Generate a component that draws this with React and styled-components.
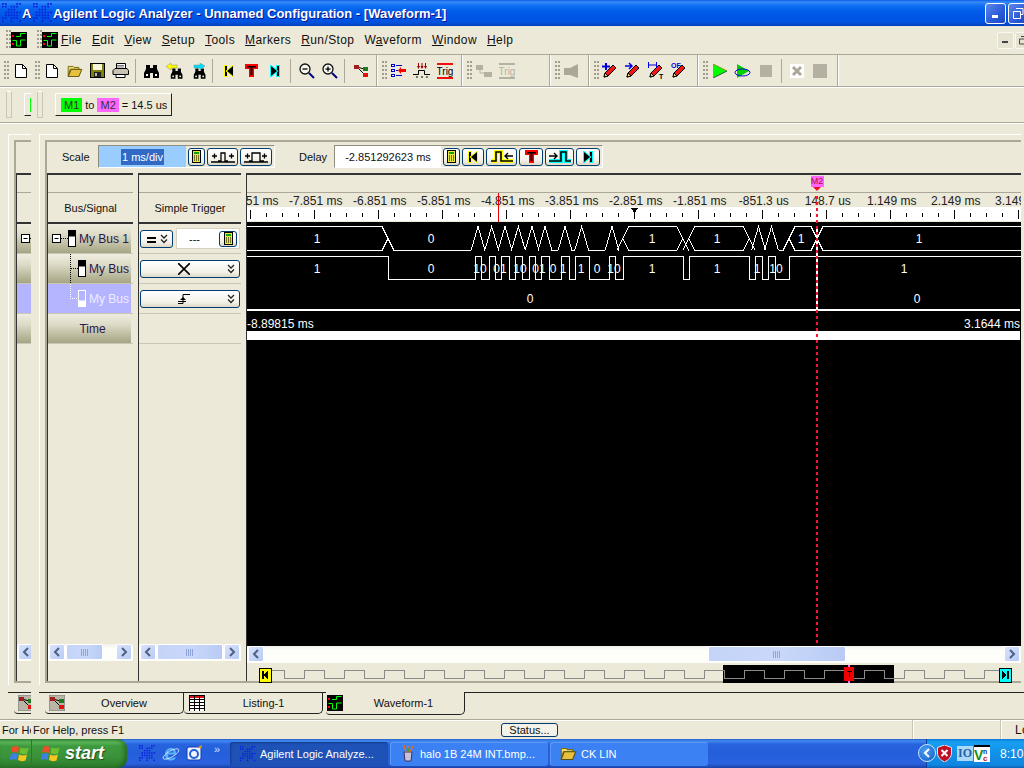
import styled, { createGlobalStyle } from 'styled-components';

const GlobalStyle = createGlobalStyle`
  html, body { margin: 0; padding: 0; background: #ece9d8; overflow: hidden; }
  body { font-family: "Liberation Sans", Arial, sans-serif; font-size: 11px; color: #111; }
  u { text-decoration: underline; }
`;

const BEIGE = '#ece9d8';
const RULE = '#aca899';

const Page = styled.div`
  width: 1024px;
  height: 768px;
  display: flex;
  flex-direction: column;
  overflow: hidden;
`;
const Desk = styled.div`
  height: 739px;
  display: flex;
`;
const Clip = styled.div`
  overflow: hidden;
  flex: ${p => (p.$ghost ? '0 0 31px' : '1 1 0')};
  min-width: 0;
`;
const Win = styled.div`
  width: 1024px;
  height: 739px;
  display: flex;
  flex-direction: column;
  background: ${BEIGE};
`;

/* title bar */
const TitleBar = styled.div`
  height: 26px;
  display: flex;
  align-items: center;
  padding: 0 3px 0 2px;
  color: #fff;
  font-weight: bold;
  font-size: 13px;
  background: linear-gradient(#0a5ce0 0, #3a8dfa 2px, #1572f5 5px, #0361ec 10px, #0056e5 16px, #0054e3 21px, #0450d8 23px, #003fb8 26px);
`;
const TitleText = styled.span`
  text-shadow: 1px 1px 0 #0f1089;
  white-space: nowrap;
`;
const CaptionButtons = styled.div`
  margin-left: auto;
  display: flex;
  gap: 2px;
`;
const CaptionButton = styled.div`
  width: 21px;
  height: 21px;
  box-sizing: border-box;
  border: 1px solid #fff;
  border-radius: 3px;
  background: ${p => (p.$close ? 'linear-gradient(135deg,#e8907a,#c43a14)' : 'linear-gradient(135deg,#5e88ec,#2a5ad8 60%,#1c46c0)')};
  display: flex;
  align-items: center;
  justify-content: center;
`;

/* menu */
const MenuBar = styled.div`
  height: 28px;
  border-bottom: 1px solid ${RULE};
  display: flex;
  align-items: center;
  padding-left: 6px;
  padding-right: 5px;
`;
const Gripper = styled.div`
  flex: none;
  width: 5px;
  height: ${p => p.$h || 20}px;
  background-image: radial-gradient(circle at 1px 1px, #a09d90 1px, transparent 1.1px);
  background-size: 3px 4px;
  margin-right: ${p => p.$mr ?? 4}px;
`;
const MenuItem = styled.span`
  margin-left: ${p => p.$ml}px;
  font-size: 12px;
  letter-spacing: 0.4px;
  white-space: nowrap;
  line-height: 16px;
`;
const MdiButtons = styled.div`
  margin-left: auto;
  display: flex;
  gap: 1px;
`;
const MdiButton = styled.div`
  width: 17px;
  height: 17px;
  border: 1px solid #f8f7f0;
  box-sizing: border-box;
  border-radius: 2px;
  background: #e6e3d2;
  display: flex;
  align-items: center;
  justify-content: center;
`;
const IconSlot = styled.div`
  margin: 0 3px 0 0;
  display: flex;
`;

/* toolbar */
const ToolBar = styled.div`
  height: 31px;
  border-bottom: 1px solid ${RULE};
  box-shadow: 0 1px 0 #fff;
  display: flex;
  align-items: stretch;
`;
const ToolGroup = styled.div`
  display: flex;
  align-items: center;
  padding: 0 ${p => p.$pr ?? 5}px 0 ${p => p.$pl ?? 4}px;
  border-right: 1px solid ${RULE};
  box-shadow: 1px 0 0 #fff;
  margin-right: 1px;
`;
const ToolButton = styled.div`
  flex: none;
  width: ${p => p.$w || 23}px;
  height: 24px;
  display: flex;
  align-items: center;
  justify-content: center;
`;
const ToolSep = styled.div`
  flex: none;
  width: 1px;
  height: 24px;
  background: ${RULE};
  margin: 0 ${p => p.$r ?? 4}px 0 ${p => p.$l ?? 3}px;
`;

/* marker read-out */
const MarkerBar = styled.div`
  height: 35px;
  display: flex;
  align-items: center;
  padding-left: 6px;
`;
const DragBar = styled.div`
  flex: none;
  width: 4px;
  height: 25px;
  border: 1px solid #c9c6b6;
  border-top-color: #fff;
  margin-right: 12px;
`;
const Readout = styled.div`
  flex: none;
  height: 23px;
  width: 117px;
  box-sizing: border-box;
  display: flex;
  align-items: center;
  gap: 3px;
  padding-left: 5px;
  border: 1px solid;
  border-color: #fff #222 #222 #fff;
  white-space: nowrap;
`;
const Chip = styled.span`
  background: ${p => p.$bg};
  padding: 0 3px;
  line-height: 14px;
  height: 14px;
  color: #333;
`;

/* panels */
const Body = styled.div`
  height: 570px;
  flex: none;
  box-sizing: border-box;
  border-top: 1px solid ${RULE};
  box-shadow: inset 0 1px 0 #fff;
  padding: 11px 34px 7px 8px;
`;
const Frame = styled.div`
  height: 100%;
  box-sizing: border-box;
  border-top: 1px solid #fff;
  border-left: 1px solid #fff;
  padding: 5px 0 0 5px;
  display: flex;
`;
const Inner = styled.div`
  flex: 1;
  min-width: 0;
  box-sizing: border-box;
  height: 543px;
  border: 2px solid ${RULE};
  border-right: none;
  display: flex;
  flex-direction: column;
`;
const ScaleRow = styled.div`
  height: 31px;
  box-sizing: border-box;
  flex: none;
  display: flex;
  align-items: center;
  padding: 0 0 2px 15px;
`;
const FieldLabel = styled.span`
  width: ${p => p.$w}px;
  flex: none;
`;
const Well = styled.div`
  flex: none;
  height: 23px;
  box-sizing: border-box;
  display: flex;
  align-items: center;
  gap: 2px;
  border: 1px solid;
  border-color: #8f8d80 #fff #fff #8f8d80;
  padding-right: 2px;
  margin-left: ${p => p.$ml || 0}px;
`;
const Entry = styled.div`
  width: ${p => p.$w}px;
  height: 100%;
  background: ${p => p.$bg};
  display: flex;
  align-items: center;
  justify-content: center;
`;
const Selected = styled.span`
  background: #316ac5;
  color: #fff;
  line-height: 16px;
  padding: 0 1px;
`;
const XpButton = styled.div`
  flex: none;
  width: ${p => p.$w}px;
  height: ${p => p.$h || 18}px;
  box-sizing: border-box;
  border: 1px solid #003c74;
  border-radius: 3px;
  background: linear-gradient(#fff, #f3f1e8 70%, #dcd8c6);
  display: flex;
  align-items: center;
  justify-content: center;
`;
const Columns = styled.div`
  flex: 1;
  min-height: 0;
  display: grid;
  grid-template-columns: 86px 103px 775px;
  column-gap: 5px;
`;
const Column = styled.div`
  display: flex;
  flex-direction: column;
  border-top: 2px solid #333;
  border-left: 1px solid #333;
  min-height: 0;
  position: relative;
`;
const ColTop = styled.div`
  height: 17px;
  flex: none;
  border-bottom: 1px solid ${RULE};
`;
const ColTitle = styled.div`
  height: 29px;
  flex: none;
  display: flex;
  align-items: center;
  justify-content: center;
  border-bottom: 2px solid #333;
`;
const RowCell = styled.div`
  height: 30px;
  flex: none;
  box-sizing: border-box;
  border-bottom: 1px solid #c9c6b6;
  display: flex;
  align-items: center;
  padding: ${p => p.$pad || '0'};
  gap: 3px;
`;
const SignalButton = styled.div`
  width: 83px;
  height: 29px;
  box-sizing: border-box;
  font-size: 12px;
  display: flex;
  align-items: center;
  justify-content: ${p => (p.$center ? 'center' : 'flex-start')};
  padding-left: ${p => (p.$center ? 6 : 0)}px;
  color: ${p => (p.$sel ? '#eeeeff' : '#2c1748')};
  background: ${p => (p.$sel ? '#b5b5ff' : 'linear-gradient(#efeddf, #dedcc8 35%, #a5a483)')};
  white-space: nowrap;
`;
const Dash = styled.div`
  flex: 1;
  height: 19px;
  background: #fff;
  display: flex;
  align-items: center;
  justify-content: space-between;
  padding-left: 12px;
  padding-right: 2px;
  border: 1px solid #d6d3c2;
`;
const Grow = styled.div`
  flex: 1;
`;
const ScrollRow = styled.div`
  flex: none;
  height: 17px;
  display: flex;
  gap: 1px;
  padding: 0 1px;
  margin-bottom: ${p => p.$mb ?? 20}px;
  background: linear-gradient(#f3f1ec, #fefefb 30%, #fdfdf9);
`;
const ScrollBtn = styled.div`
  flex: none;
  width: 16px;
  height: 16px;
  box-sizing: border-box;
  border: 1px solid #fff;
  border-radius: 2px;
  background: linear-gradient(135deg, #d8e3fb, #b9cbf5);
  display: flex;
  align-items: center;
  justify-content: center;
`;
const ScrollTrack = styled.div`
  flex: 1;
  min-width: 0;
  display: flex;
`;
const Thumb = styled.div`
  height: 16px;
  box-sizing: border-box;
  border: 1px solid #fff;
  border-radius: 2px;
  flex: none;
  width: ${p => p.$w}px;
  margin-left: ${p => p.$l || 0}px;
  background: linear-gradient(90deg, #c4d4f8, #c9d8fa 50%, #b9cbf5);
  display: flex;
  align-items: center;
  justify-content: center;
`;
const Marker = styled.div`
  position: absolute;
  left: 563px;
  top: 0;
  width: 14px;
  height: 17px;
  display: flex;
  flex-direction: column;
  align-items: center;
`;
const MarkerFlag = styled.div`
  width: 13px;
  height: 11px;
  background: #ff66ff;
  color: #b01030;
  font-size: 9px;
  line-height: 11px;
  text-align: center;
  border-top: 1px solid #ddd;
`;
const MarkerArrow = styled.div`
  width: 0;
  height: 0;
  border-left: 4px solid transparent;
  border-right: 4px solid transparent;
  border-top: 4px solid #f01020;
`;
const WaveSvg = styled.svg`
  display: block;
  flex: none;
  font-family: "Liberation Sans", Arial, sans-serif;
  font-size: 12px;
`;

/* tabs */
const TabStrip = styled.div`
  height: 26px;
  flex: none;
  margin-left: 8px;
  border-top: 1px solid #222;
  display: flex;
  padding-left: 6px;
`;
const Tab = styled.div`
  flex: none;
  width: ${p => p.$w}px;
  height: ${p => (p.$active ? 23 : 21)}px;
  margin-left: ${p => p.$ml || 0}px;
  margin-top: ${p => (p.$active ? -1 : 0)}px;
  box-sizing: border-box;
  background: ${BEIGE};
  border-bottom: 1px solid #222;
  border-right: 1px solid #222;
  border-bottom-right-radius: 5px;
  border-bottom-left-radius: 4px;
  display: flex;
  align-items: center;
  padding-left: ${p => p.$pl}px;
`;
const TabLabel = styled.span`
  flex: 1;
  text-align: center;
`;

/* status */
const StatusBar = styled.div`
  height: 19px;
  flex: none;
  border-top: 1px solid ${RULE};
  box-shadow: inset 0 1px 0 #fff;
  display: flex;
  align-items: center;
  white-space: nowrap;
`;
const StatusText = styled.span`
  flex: none;
  width: 468px;
  padding-left: 2px;
  font-size: 11px;
`;
const StatusBtn = styled.div`
  flex: none;
  width: 57px;
  height: 14px;
  box-sizing: border-box;
  border: 1px solid #003c74;
  border-radius: 3px;
  background: #f4f3ea;
  text-align: center;
  line-height: 12px;
`;
const StatusPane = styled.div`
  flex: none;
  height: 100%;
  box-sizing: border-box;
  width: ${p => p.$w}px;
  border-right: 1px solid #c9c6b6;
  box-shadow: 1px 0 0 #fff;
`;

/* taskbar */
const TaskBar = styled.div`
  height: 29px;
  display: flex;
  align-items: center;
  color: #fff;
  background: linear-gradient(#2a5cc8 0, #3f8cf3 2px, #2964de 5px, #245edb 50%, #2a62de 85%, #1941a5 100%);
`;
const StartButton = styled.div`
  flex: none;
  width: 127px;
  height: 29px;
  box-sizing: border-box;
  padding-left: 10px;
  display: flex;
  align-items: center;
  border-radius: 0 9px 9px 0;
  background: linear-gradient(#3c8a3c 0, #5cb85c 3px, #3f9a3f 7px, #3a933a 60%, #2c7a2c 100%);
  box-shadow: inset -3px 0 4px rgba(20, 70, 20, 0.5);
`;
const StartSeam = styled.div`
  width: 1px;
  height: 29px;
  margin: 0 9px 0 1px;
  background: #2b7a2b;
`;
const StartText = styled.span`
  margin-left: 4px;
  font-size: 18px;
  font-weight: bold;
  font-style: italic;
  text-shadow: 1px 1px 1px #1d4f1d;
`;
const QuickIcons = styled.div`
  flex: none;
  width: 103px;
  display: flex;
  align-items: center;
  gap: 6px;
  padding-left: 12px;
  box-sizing: border-box;
`;
const Chevrons = styled.span`
  font-size: 11px;
  margin: -10px 0 0 5px;
  color: #cfe0ff;
`;
const TaskButton = styled.div`
  flex: none;
  width: 158px;
  height: 24px;
  margin-right: 2px;
  box-sizing: border-box;
  padding-left: 10px;
  border-radius: 3px;
  display: flex;
  align-items: center;
  gap: 4px;
  font-size: 11px;
  background: ${p => (p.$active ? '#1e52b7' : '#3c81f3')};
  box-shadow: ${p => (p.$active ? 'inset 1px 1px 2px #143a8a' : 'inset 1px 1px 0 #5f99f6')};
  white-space: nowrap;
`;
const Tray = styled.div`
  margin-left: auto;
  flex: none;
  width: 98px;
  height: 29px;
  position: relative;
  display: flex;
  align-items: center;
  padding-left: 10px;
  box-sizing: border-box;
  border-left: 1px solid #0b3d9e;
  background: linear-gradient(#0c78d8 0, #18a0f0 3px, #1290e8 50%, #0f86df 90%, #0b62b8 100%);
`;
const TrayBack = styled.div`
  position: absolute;
  left: -9px;
  top: 5px;
  width: 18px;
  height: 18px;
  border-radius: 50%;
  border: 1px solid #cfe6ff;
  box-sizing: border-box;
  background: radial-gradient(circle at 40% 35%, #4aa0f5, #1058c8);
  display: flex;
  align-items: center;
  justify-content: center;
`;
const Clock = styled.span`
  margin-left: 10px;
  font-size: 12px;
`;
const IoBox = styled.span`
  flex: none;
  width: 16px;
  height: 15px;
  margin: 0 1px 0 5px;
  background: #a9d8f8;
  color: #2a62a8;
  font-family: "Liberation Serif", serif;
  font-weight: bold;
  font-size: 12px;
  line-height: 15px;
  text-align: center;
`;

/* drawings */
const GREEN = '#00ff00';

const Starburst = ({ size = 20 }) => {
  const dots = [];
  for (let i = 0; i < 7; i++) {
    for (let j = 0; j < 7; j++) {
      const d = Math.abs(i - 3) + Math.abs(j - 3);
      if (i === j || i + j === 6 || d <= 2 || (i + j) % 4 === 1) dots.push([i, j]);
    }
  }
  return (
    <svg width={size} height={size} viewBox="0 0 14 14">
      {dots.map(([i, j]) => (
        <rect key={`${i}-${j}`} x={i * 2} y={j * 2} width="1.2" height="1.2" fill="#0a1ee0" />
      ))}
    </svg>
  );
};
const WaveIcon = () => (
  <svg width="16" height="16" viewBox="0 0 16 16">
    <rect width="16" height="16" />
    <path d="M5 4.500h4.500V1.500h5M1.500 8.500h4v5.500h4v-6h5" fill="none" stroke={GREEN} />
    <rect x="1" y="3" width="2" height="2" fill="#f00" />
    <rect x="1" y="11" width="2" height="2" fill="#f00" />
  </svg>
);
const Doc = () => (
  <svg width="14" height="16" viewBox="0 0 14 16">
    <path d="M1.500 1.500h7l4 4v9h-11z" fill="#fff" stroke="#000" />
    <path d="M8.500 1.500v4h4" fill="none" stroke="#000" />
  </svg>
);
const Folder = ({ w = 16 }) => (
  <svg width={w} height={w * 0.85} viewBox="0 0 16 14">
    <path d="M1 12.500v-10h5l1 1h5v2h-9l-2 7z" fill="#f5dc70" stroke="#7a6a10" />
    <path d="M1 13l3-7.500h11l-3 7.500z" fill="#e8c040" stroke="#5a5008" />
  </svg>
);
const Save = () => (
  <svg width="15" height="15" viewBox="0 0 15 15">
    <rect x=".5" y=".5" width="14" height="14" fill="#7f7f10" stroke="#000" />
    <rect x="3" y="1" width="9" height="6" fill="#f5f5e0" />
    <rect x="4" y="9" width="7" height="5" fill="#222" />
    <rect x="5" y="10" width="2" height="3" fill="#bbb" />
  </svg>
);
const Printer = () => (
  <svg width="17" height="15" viewBox="0 0 17 15">
    <path d="M4.500 6V.5h9V6" fill="#fff" stroke="#000" />
    <path d="M1 7.500l2-2h12l1.500 2v4h-15.500z" fill="#c6c3b4" stroke="#000" />
    <path d="M4 11.500h9v3H4z" fill="#fff" stroke="#000" />
    <path d="M5 2.500h7M5 4h7" stroke="#777" />
  </svg>
);
const Binocular = ({ arrow, dir }) => (
  <svg width="17" height="16" viewBox="0 0 17 16">
    <g transform={arrow ? 'translate(4 4) scale(.78)' : undefined}>
      <path d="M3 2h4v3h3V2h4v4l2 4v5h-6v-5H7v5H1v-5l2-4z" />
      <rect x="3" y="11" width="2" height="2" fill="#fff" />
      <rect x="12" y="11" width="2" height="2" fill="#fff" />
    </g>
    {arrow && (
      <path
        d={dir < 0 ? 'M0 3.500L5 0v2h6v3H5v2z' : 'M16 3L11 0v2H5v3h6v2z'}
        fill={arrow}
        stroke="#777"
        strokeWidth=".4"
      />
    )}
  </svg>
);
const EndMark = ({ bg, flip, size = 12 }) => (
  <svg width={size} height={size} viewBox="0 0 12 12">
    <g transform={flip ? 'matrix(-1 0 0 1 12 0)' : undefined} stroke={bg} strokeWidth="2" paintOrder="stroke">
      <rect x="2" y="1" width="2" height="10" />
      <path d="M10 1v10L4 6z" />
    </g>
  </svg>
);
const TeeMark = ({ size = 13 }) => (
  <svg width={size} height={size} viewBox="0 0 13 13">
    <path d="M0 0h13v5H9v8H4V5H0z" fill="#f00" />
    <path d="M2 2h9v1.500H7.500V11h-2V3.500H2z" />
  </svg>
);
const Magnifier = ({ plus }) => (
  <svg width="16" height="16" viewBox="0 0 16 16">
    <circle cx="6" cy="6" r="5" fill="#f8f8f0" stroke="#111" strokeWidth="1.300" />
    <path d="M3.500 6h5" stroke="#000" strokeWidth="1.300" />
    {plus && <path d="M6 3.500v5" stroke="#000" strokeWidth="1.300" />}
    <path d="M10 10l5 5" stroke="#000080" strokeWidth="2" />
  </svg>
);
const TreeIcon = () => (
  <svg width="14" height="14" viewBox="0 0 14 14">
    <path d="M3 3l7 2M4 4l6 6" stroke="#000" />
    <rect x="0" y="1" width="5" height="4" fill="#a02020" />
    <rect x="9" y="3" width="5" height="4" fill="#1d7a1d" />
    <rect x="9" y="9" width="5" height="4" fill="#e01010" />
  </svg>
);
const ListIcon = () => (
  <svg width="15" height="14" viewBox="0 0 15 14">
    <g fill="none" stroke="#00c">
      <rect x=".5" y=".5" width="3" height="2" />
      <rect x=".5" y="5.500" width="3" height="2" />
      <rect x=".5" y="10.500" width="3" height="2" />
      <path d="M5 1.500h6M5 6.500h2M5 11.500h6" />
    </g>
    <path d="M15 5v3h-5v2L7 6.500 10 3v2z" fill="#f00" />
  </svg>
);
const TrigEdge = () => (
  <svg width="17" height="15" viewBox="0 0 17 15">
    <path d="M5.500 0v5M9 0v5M12.500 0v5" stroke="#a00000" />
    <path d="M4 3l1.500 3L7 3zM7.500 3L9 6l1.500-3zM11 3l1.500 3L14 3z" fill="#a00000" />
    <path d="M0 11.500h5.500V7.500h6v4H17" fill="none" stroke="#000" />
    <path d="M3 14h2M8 14h2M13 14h2" stroke="#000" />
  </svg>
);
const TrigMark = ({ grey }) => {
  const c = grey ? '#b4b1a2' : '#f01010';
  return (
    <svg width="16" height="16" viewBox="0 0 16 16" fontFamily="Liberation Sans" fontSize="10">
      <rect y="0" width="16" height="2" fill={c} />
      <rect y="14" width="16" height="2" fill={c} />
      <text x="8" y="12" textAnchor="middle" fill={grey ? c : '#000'}>Trig</text>
    </svg>
  );
};
const Speaker = () => (
  <svg width="15" height="14" viewBox="0 0 15 14">
    <path d="M0 4h6l8-4v14l-8-3H0z" fill="#aca899" />
  </svg>
);
const Pencil = ({ head }) => (
  <svg width="17" height="17" viewBox="0 0 17 17" fontFamily="Liberation Sans" fontSize="7" fontWeight="bold">
    <path d="M2 15l1-4 8-8 3 3-8 8z" fill="#f01818" stroke="#000" />
    <path d="M2 15l1-4 3 3z" fill="#f5e070" stroke="#000" />
    {head === 'plus' && <path d="M0 4.500h8M4 1v7" stroke="#0000e0" strokeWidth="2" />}
    {head === 'arrow' && <path d="M0 4h7M4 1l3 3-3 3" fill="none" stroke="#0000e0" strokeWidth="1.500" />}
    {head === 'span' && <path d="M.5 0v6M8.500 0v6M1 3h7" stroke="#0000e0" />}
    {head === 'of' && <text x="0" y="6" fill="#0000e0">OF</text>}
    {head === 'span' && <text x="11" y="17" fill="#000">T</text>}
  </svg>
);
const Play = () => (
  <svg width="14" height="14" viewBox="0 0 14 14">
    <path d="M0 0l14 7-14 7z" fill={GREEN} />
    <path d="M0 0l14 7" stroke="#8a8a20" />
    <path d="M0 14l14-7" stroke="#444" />
  </svg>
);
const PlayLoop = () => (
  <svg width="17" height="14" viewBox="0 0 17 14">
    <path d="M3 0l12 7-12 7z" fill="#00d000" />
    <ellipse cx="8.500" cy="8.500" rx="7.500" ry="3.500" fill="none" stroke="#0000e0" />
  </svg>
);
const GreySquare = ({ s, x }) => (
  <svg width={s} height={s} viewBox="0 0 14 14">
    <rect width="14" height="14" fill={x ? '#fff' : '#b4b1a2'} />
    {x && <path d="M3 3l8 8M11 3l-8 8" stroke="#aca899" strokeWidth="3" />}
  </svg>
);
const Calc = () => (
  <svg width="9" height="13" viewBox="0 0 9 13">
    <rect x=".5" y=".5" width="8" height="12" fill="#e8e840" stroke="#000" />
    <rect x="2" y="2" width="5" height="2" fill="#10a010" />
    <path d="M2 6h1M4 6h1M6 6h1M2 8h1M4 8h1M6 8h1M2 10h1M4 10h1M6 10h1" stroke="#000" />
  </svg>
);
const Pulse = ({ tone, flip }) => (
  <svg width="24" height="13" viewBox="0 0 24 13">
    <g transform={flip ? 'matrix(-1 0 0 1 24 0)' : undefined} fill="none">
      <path d="M1 11h5V2h5v9h12" stroke={tone} strokeWidth="4" />
      <path d="M1 11h5V2h5v9h12" stroke="#000" strokeWidth="1.600" />
      <path d="M23 6h-8M18 3l-3 3 3 3" stroke="#000" strokeWidth="1.400" />
    </g>
  </svg>
);
const PulseAdd = ({ wide }) => (
  <svg width="24" height="12" viewBox="0 0 24 12">
    <path d={wide ? 'M0 11h24M1 5h5M3.500 2.500v5M18 5h5M20.500 2.500v5M5 10h3V2h8v8h4' : 'M0 11h24M1 5h5M3.500 2.500v5M18 5h5M20.500 2.500v5M7 10h3V2h4v8h3'} fill="none" stroke="#000" strokeWidth="1.300" />
  </svg>
);
const DoubleDown = () => (
  <svg width="8" height="10" viewBox="0 0 8 10">
    <path d="M1 1l3 3 3-3M1 5.500l3 3 3-3" fill="none" stroke="#222" strokeWidth="1.300" />
  </svg>
);
const Chev = ({ right, color = '#4d6185' }) => (
  <svg width="8" height="10" viewBox="0 0 8 10">
    <path d={right ? 'M2 1l4 4-4 4' : 'M6 1L2 5l4 4'} fill="none" stroke={color} strokeWidth="2" />
  </svg>
);
const Ridges = () => (
  <svg width="8" height="7" viewBox="0 0 8 7">
    <path d="M.5 0v7M2.500 0v7M4.500 0v7M6.500 0v7" stroke="#8fa4d8" />
  </svg>
);
const TreeGlyph = ({ level, last, selected }) => {
  const ink = selected ? '#fff' : '#000';
  const w = level ? 41 : 31;
  return (
    <svg width={w} height="29" viewBox={`0 0 ${w} 29`}>
      {!level && <rect x="4.500" y="10.500" width="8" height="8" fill="#fff" stroke="#000" />}
      {!level && <path d="M6.500 14.500h4" stroke="#000" />}
      {!level && <path d="M13 14.500h7" stroke="#000" strokeDasharray="1 1" />}
      {level > 0 && (
        <path d={last ? 'M22.500 0v14.500H30' : 'M22.500 0v29M23 14.500h7'} fill="none" stroke={ink} strokeDasharray="1 1" />
      )}
      <g transform={level ? 'translate(30 0)' : 'translate(20 0)'}>
        <rect x=".5" y="6.500" width="7" height="16" fill={selected ? 'none' : '#fff'} stroke={ink} />
        <rect x=".5" y={selected ? 16.500 : 6.500} width="7" height="6" fill={ink} />
      </g>
    </svg>
  );
};
const XBus = () => (
  <svg width="12" height="12" viewBox="0 0 12 12">
    <path d="M0 0l12 12M12 0L0 12" stroke="#000" strokeWidth="1.600" />
  </svg>
);
const Edge = () => (
  <svg width="12" height="12" viewBox="0 0 12 12">
    <path d="M0 10.500h5V1.500h7" fill="none" stroke="#000" />
    <path d="M2 7l3-3 3 3z" />
    <path d="M0 8.500h8" stroke="#000" />
  </svg>
);
const ListingIcon = () => (
  <svg width="16" height="16" viewBox="0 0 16 16">
    <rect width="16" height="16" fill="#fff" />
    <rect width="16" height="3" fill="#e01010" />
    <path d="M0 .5h16M0 4.500h16M0 7.500h16M0 10.500h16M0 13.500h16M.5 0v16M5.500 0v16M10.500 0v16M15.500 0v16" stroke="#000" />
  </svg>
);
const OverviewIcon = () => (
  <svg width="16" height="16" viewBox="0 0 16 16">
    <rect width="16" height="16" fill="#b9b6a8" stroke="#777" />
    <g transform="translate(1 1)"><TreeIcon /></g>
  </svg>
);
const XpLogo = () => (
  <svg width="20" height="19" viewBox="0 0 20 19">
    <path d="M2 3q3-2 7 0l-1 6q-4-2-7 0z" fill="#e8502a" />
    <path d="M10.500 3.500q4 2 8 0l-1.500 6q-4 1.500-7.500-.5z" fill="#6fc030" />
    <path d="M1 10.500q3-2 6.500-.5L6.500 16q-3-1.500-7 0z" fill="#3f80e8" />
    <path d="M9 10.500q4 2 8 0l-1.500 6q-4 1.500-7.500-.5z" fill="#f5c820" />
  </svg>
);
const IeIcon = () => (
  <svg width="18" height="18" viewBox="0 0 18 18">
    <path d="M4 9.500h10c.5-4-2-6.500-5-6.500S3 5.500 3 9.500s2.500 6 6 6c2.500 0 4-1 5-3h-3c-.5 .8-1 1-2 1-1.800 0-3-1.300-3-4zM6 7.500c.3-1.800 1.500-2.500 3-2.500s2.500 .8 2.500 2.500z" fill="#5ab4f5" fillRule="evenodd" />
    <ellipse cx="9" cy="9" rx="9" ry="3" fill="none" stroke="#d8ecff" strokeWidth=".8" transform="rotate(-30 9 9)" />
  </svg>
);
const MailIcon = () => (
  <svg width="17" height="17" viewBox="0 0 17 17">
    <rect x="1" y="2" width="14" height="13" rx="2" fill="#f0f4ff" stroke="#1040b0" />
    <circle cx="8" cy="9" r="4" fill="none" stroke="#2060d8" strokeWidth="2" />
    <path d="M12 2l4-2-1 4z" fill="#e8a020" />
  </svg>
);
const BrushesIcon = () => (
  <svg width="16" height="17" viewBox="0 0 16 17">
    <path d="M4 7h8l-1 9H5z" fill="#c8c2d8" stroke="#403060" />
    <path d="M6 7L4 0M8 7V1M10 7l3-6" stroke="#e07020" strokeWidth="1.500" />
    <path d="M8 7V3" stroke="#30a040" strokeWidth="1.500" />
  </svg>
);
const Shield = () => (
  <svg width="15" height="17" viewBox="0 0 15 17">
    <path d="M7.500 0l7 2.500V8c0 4-3 7-7 9-4-2-7-5-7-9V2.500z" fill="#c01020" stroke="#dfe8f0" />
    <path d="M4.500 5l6 6M10.500 5l-6 6" stroke="#fff" strokeWidth="2" />
  </svg>
);
const VncIcon = () => (
  <svg width="16" height="17" viewBox="0 0 16 17" fontFamily="Liberation Sans" fontWeight="bold">
    <rect width="16" height="17" fill="#fff" />
    <rect width="16" height="2" />
    <text x="0" y="15" fontSize="14" fill="#109010">V</text>
    <text x="9" y="9" fontSize="7" fill="#1030c0">n</text>
    <text x="9" y="16" fontSize="8" fill="#c01010">c</text>
  </svg>
);

/* waveform chart: coordinates are those of the screen */
const X0 = 247;
const Y0 = 193;
const majors = [...Array(13)].map((_, i) => 250.3 + i * 64);
const rulerLabels = ['-8.851 ms', '-7.851 ms', '-6.851 ms', '-5.851 ms', '-4.851 ms', '-3.851 ms', '-2.851 ms', '-1.851 ms', '-851.3 us', '148.7 us', '1.149 ms', '2.149 ms', '3.149 ms'];
const minors = [...Array(50)].map((_, i) => 250.3 + i * 16).filter((_, i) => i % 4 !== 0);

const highs = [
  [240, 388], [474.7, 481.3], [488.7, 494.7], [501.3, 508.7], [514.7, 522], [528.7, 535.3], [541.3, 548.7],
  [561.3, 568.7], [574.7, 588.7], [608.7, 615.3], [622.7, 682.7], [688.7, 749.3], [755, 762], [768, 775],
  [789, 817], [817, 1030],
];
const BT = 226.5;
const BB = 250.5;
const BM = 238.5;
const isNarrow = ([a, b]) => b - a < 15;
const shapeStart = s => (isNarrow(s) ? (s[0] + s[1]) / 2 - 7 : s[0] - 6);
const shapeEnd = s => (isNarrow(s) ? (s[0] + s[1]) / 2 + 7 : s[1] + 6);
const busPath = highs
  .map((s, i) => {
    const [a, b] = s;
    const next = highs[i + 1];
    const rail = next && shapeStart(next) > shapeEnd(s) ? `M${shapeEnd(s)} ${BB}H${shapeStart(next)} ` : '';
    if (isNarrow(s)) {
      const c = (a + b) / 2;
      return `M${c - 7} ${BB}L${c} ${BT}L${c + 7} ${BB} ${rail}`;
    }
    return `M${a - 6} ${BB}L${a + 6} ${BT}H${b - 6}L${b + 6} ${BB}M${a} ${BM}L${a + 6} ${BB}H${b - 6}L${b} ${BM} ${rail}`;
  })
  .join('');
const digitalPath = (() => {
  let d = 'M240 256.5';
  highs.forEach(([a, b], i) => {
    if (i > 0 && a !== highs[i - 1][1]) d += `H${Math.round(a)}V256.5`;
    d += `H${Math.round(b)}`;
    if (i < highs.length - 1 && highs[i + 1][0] !== b) d += 'V279.5';
  });
  return d;
})();
const busText = [[317, '1'], [431, '0'], [652, '1'], [717, '1'], [801, '1'], [919, '1']];
const sigText = [[317, '1'], [431, '0'], [480, '10'], [500, '01'], [520, '10'], [539, '01'], [553, '0'], [563, '1'], [581, '1'], [597, '0'], [614, '10'], [652, '1'], [717, '1'], [757, '1'], [776, '10'], [904, '1']];

const WaveChart = () => (
  <WaveSvg width="774" height="453" viewBox={`${X0} ${Y0} 774 453`} shapeRendering="crispEdges">
    <rect x={X0} y="207" width="774" height="14" fill="#fff" />
    <rect x={X0} y="222" width="774" height="424" fill="#000" />
    {rulerLabels.map((t, i) => (
      <text key={t} x={majors[i] + 1.5} y="205" textAnchor="middle" fill="#222">{t}</text>
    ))}
    <path d={majors.map(x => `M${Math.round(x) + 0.5} 209.500V219`).join('')} stroke="#000" />
    <path d={minors.map(x => `M${Math.round(x) + 0.5} 212.500V217`).join('')} stroke="#000" />
    <path d="M498.500 193V222" stroke="#f00000" />
    <path d="M631 208h7l-3.500 5z" />
    <path d={busPath} fill="none" stroke="#fff" />
    <path d={digitalPath} fill="none" stroke="#fff" />
    <path d="M247 309.500H1020" stroke="#fff" strokeWidth="2" />
    <rect x="247" y="331" width="773" height="9" fill="#fff" />
    <g fill="#fff" textAnchor="middle">
      {busText.map(([x, t]) => <text key={x} x={x} y="243">{t}</text>)}
      {sigText.map(([x, t]) => <text key={x} x={x} y="273">{t}</text>)}
      <text x="530" y="303">0</text>
      <text x="917" y="303">0</text>
    </g>
    <text x="247" y="328" fill="#fff">-8.89815 ms</text>
    <text x="1020" y="328" fill="#fff" textAnchor="end">3.1644 ms</text>
    <path d="M817 226V310" stroke="#fff" strokeWidth="2" />
    <path d="M817 190V646" stroke="#ff1030" strokeWidth="2" strokeDasharray="3 3" />
  </WaveSvg>
);

const squareWave = (() => {
  let d = 'M272 5H284';
  for (let x = 284; x < 998; x += 40) d += `V12.500H${x + 20}V5H${x + 40}`;
  return d;
})();
const MiniStrip = () => (
  <WaveSvg width="774" height="18" viewBox="247 0 774 18" shapeRendering="crispEdges">
    <rect x="723" y="0" width="171" height="18" />
    <path d={squareWave} fill="none" stroke="#8a8a8a" transform="translate(0 .5)" />
    <path d="M848 0h2v18h-2z" fill="#ff66ff" />
    <rect x="844" y="2" width="10" height="14" fill="#f00000" />
    <path d="M846.500 6h5v1H849.500v5h-1V7h-2z" />
    <rect x="259.500" y="3.500" width="12" height="14" fill="#ffff00" stroke="#000" />
    <path d="M262 6h1.500v8H262zM268 6v8l-4.500-4z" />
    <rect x="999.500" y="3.500" width="12" height="14" fill="#00ffff" stroke="#000" />
    <path d="M1007 6h1.500v8H1007zM1002 6v8l4.500-4z" />
  </WaveSvg>
);

/* one scroll bar */
const Scroll = ({ l, w, mb, ridges = true }) => (
  <ScrollRow $mb={mb}>
    <ScrollBtn><Chev /></ScrollBtn>
    <ScrollTrack>
      <Thumb $l={l} $w={w}>{ridges && <Ridges />}</Thumb>
    </ScrollTrack>
    <ScrollBtn><Chev right /></ScrollBtn>
  </ScrollRow>
);

const menus = [
  ['F', 'ile', 0], ['E', 'dit', 10], ['V', 'iew', 10], ['S', 'etup', 10], ['T', 'ools', 10], ['M', 'arkers', 10], ['R', 'un/Stop', 10],
];

const SelectBody = styled(XpButton)`
  flex: 1;
  padding: 0 4px 0 0;
`;
const SelectGlyph = styled.div`
  flex: 1;
  display: flex;
  justify-content: center;
`;
const TriggerSelect = ({ children }) => (
  <SelectBody $w={99}>
    <SelectGlyph>{children}</SelectGlyph>
    <DoubleDown />
  </SelectBody>
);

/* the signal column, in full or (for the stale copy) with its text left out */
const SignalColumn = ({ stale }) => (
  <Column>
    <ColTop />
    <ColTitle>{!stale && 'Bus/Signal'}</ColTitle>
    <RowCell><SignalButton><TreeGlyph level={0} />{!stale && 'My Bus 1'}</SignalButton></RowCell>
    <RowCell><SignalButton><TreeGlyph level={1} />{!stale && 'My Bus'}</SignalButton></RowCell>
    <RowCell><SignalButton $sel><TreeGlyph level={1} last selected />{!stale && 'My Bus'}</SignalButton></RowCell>
    <RowCell><SignalButton $center>{!stale && 'Time'}</SignalButton></RowCell>
    <Grow />
    <Scroll l={0} w={37} />
  </Column>
);

/* the screenshot shows a stale copy of the window's left edge, 31px wide */
const StaleWindow = () => (
  <Win>
    <TitleBar>
      <Starburst />
      <TitleText>A</TitleText>
    </TitleBar>
    <MenuBar>
      <Gripper $mr={0} />
      <IconSlot><WaveIcon /></IconSlot>
    </MenuBar>
    <ToolBar>
      <ToolGroup>
        <Gripper $mr={0} />
        <ToolButton><Doc /></ToolButton>
      </ToolGroup>
    </ToolBar>
    <MarkerBar>
      <DragBar />
      <Readout><Chip $bg="#00ff00">&nbsp;&nbsp;</Chip></Readout>
    </MarkerBar>
    <Body>
      <Frame>
        <Inner>
          <ScaleRow />
          <Columns><SignalColumn stale /></Columns>
        </Inner>
      </Frame>
    </Body>
    <TabStrip>
      <Tab $w={139} $pl={4}><OverviewIcon /></Tab>
    </TabStrip>
    <StatusBar>
      <StatusText>For He</StatusText>
    </StatusBar>
  </Win>
);

const AppWindow = () => (
  <Win>
    <TitleBar>
      <Starburst />
      <TitleText>Agilent Logic Analyzer - Unnamed Configuration - [Waveform-1]</TitleText>
      <CaptionButtons>
        <CaptionButton>
          <svg width="9" height="9" viewBox="0 0 9 9"><rect x="1" y="6" width="6" height="3" fill="#fff" /></svg>
        </CaptionButton>
        <CaptionButton>
          <svg width="11" height="11" viewBox="0 0 11 11"><path d="M3 .5h7v6H7.500M.5 3.500h7v7h-7z" fill="none" stroke="#fff" /></svg>
        </CaptionButton>
        <CaptionButton $close />
      </CaptionButtons>
    </TitleBar>

    <MenuBar>
      <Gripper $mr={0} />
      <IconSlot><WaveIcon /></IconSlot>
      {menus.map(([k, rest, ml]) => (
        <MenuItem key={k} $ml={ml}><u>{k}</u>{rest}</MenuItem>
      ))}
      <MenuItem $ml={10}>W<u>a</u>veform</MenuItem>
      <MenuItem $ml={10}><u>W</u>indow</MenuItem>
      <MenuItem $ml={10}><u>H</u>elp</MenuItem>
      <MdiButtons>
        <MdiButton><svg width="7" height="7" viewBox="0 0 7 7"><rect y="4" width="6" height="2" fill="#444" /></svg></MdiButton>
        <MdiButton><svg width="9" height="9" viewBox="0 0 9 9"><path d="M2 .5h6v5M.5 3h6v5h-6z" fill="none" stroke="#444" /></svg></MdiButton>
        <MdiButton />
      </MdiButtons>
    </MenuBar>

    <ToolBar>
      <ToolGroup $pr={4}>
        <Gripper $mr={0} />
        <ToolButton><Doc /></ToolButton>
        <ToolButton><Folder /></ToolButton>
        <ToolButton><Save /></ToolButton>
        <ToolButton><Printer /></ToolButton>
        <ToolSep />
        <ToolButton><Binocular /></ToolButton>
        <ToolButton><Binocular arrow="#ffff00" dir={-1} /></ToolButton>
        <ToolButton><Binocular arrow="#00e0ff" dir={1} /></ToolButton>
        <ToolSep />
        <ToolButton><EndMark bg="#ffff00" /></ToolButton>
        <ToolButton><TeeMark /></ToolButton>
        <ToolButton><EndMark bg="#00ffff" flip /></ToolButton>
        <ToolSep $l={4} />
        <ToolButton><Magnifier /></ToolButton>
        <ToolButton><Magnifier plus /></ToolButton>
        <ToolSep />
        <ToolButton><TreeIcon /></ToolButton>
      </ToolGroup>
      <ToolGroup $pr={5}>
        <Gripper $mr={0} />
        <ToolButton><ListIcon /></ToolButton>
        <ToolButton><TrigEdge /></ToolButton>
        <ToolButton><TrigMark /></ToolButton>
      </ToolGroup>
      <ToolGroup $pr={31}>
        <Gripper $mr={0} />
        <ToolButton><svg width="16" height="14" viewBox="0 0 16 14"><rect x="0" y="1" width="7" height="5" fill="#b4b1a2" /><rect x="8" y="8" width="8" height="5" fill="#b4b1a2" /><path d="M4 6v3h4" fill="none" stroke="#b4b1a2" /></svg></ToolButton>
        <ToolButton><TrigMark grey /></ToolButton>
      </ToolGroup>
      <ToolGroup $pr={5}>
        <Gripper $mr={0} />
        <ToolButton><Speaker /></ToolButton>
      </ToolGroup>
      <ToolGroup $pr={6}>
        <Gripper $mr={0} />
        <ToolButton><Pencil head="plus" /></ToolButton>
        <ToolButton><Pencil head="arrow" /></ToolButton>
        <ToolButton><Pencil head="span" /></ToolButton>
        <ToolButton><Pencil head="of" /></ToolButton>
      </ToolGroup>
      <ToolGroup $pr={6}>
        <Gripper $mr={0} />
        <ToolButton><Play /></ToolButton>
        <ToolButton><PlayLoop /></ToolButton>
        <ToolButton><GreySquare s={12} /></ToolButton>
        <ToolSep $l={4} $r={3} />
        <ToolButton><GreySquare s={14} x /></ToolButton>
        <ToolButton><GreySquare s={14} /></ToolButton>
      </ToolGroup>
    </ToolBar>

    <MarkerBar>
      <DragBar />
      <Readout>
        <Chip $bg="#00ff00">M1</Chip>to<Chip $bg="#ff66ff">M2</Chip>= 14.5 us
      </Readout>
    </MarkerBar>

    <Body>
      <Frame>
        <Inner>
          <ScaleRow>
            <FieldLabel $w={36}>Scale</FieldLabel>
            <Well>
              <Entry $w={87} $bg="#99ccff"><Selected>1 ms/div</Selected></Entry>
              <XpButton $w={17}><Calc /></XpButton>
              <XpButton $w={31}><PulseAdd /></XpButton>
              <XpButton $w={32}><PulseAdd wide /></XpButton>
            </Well>
            <FieldLabel $w={24} />
            <FieldLabel $w={26}>Delay</FieldLabel>
            <Well $ml={9}>
              <Entry $w={106} $bg="#fff">-2.851292623 ms</Entry>
              <XpButton $w={17}><Calc /></XpButton>
              <XpButton $w={22}><EndMark bg="#ffff00" /></XpButton>
              <XpButton $w={31}><Pulse tone="#ffff00" /></XpButton>
              <XpButton $w={24}><TeeMark /></XpButton>
              <XpButton $w={29}><Pulse tone="#00ffff" flip /></XpButton>
              <XpButton $w={24}><EndMark bg="#00ffff" flip /></XpButton>
            </Well>
          </ScaleRow>
          <Columns>
            <SignalColumn />
            <Column>
              <ColTop />
              <ColTitle>Simple Trigger</ColTitle>
              <RowCell $pad="0 1px">
                <XpButton $w={33}>
                  <svg width="24" height="14" viewBox="0 0 24 14"><path d="M2 5h9v2H2zM2 9h9v2H2z" /><g transform="translate(15 2)"><DoubleDown /></g></svg>
                </XpButton>
                <Dash>---<XpButton $w={18} $h={16}><Calc /></XpButton></Dash>
              </RowCell>
              <RowCell $pad="0 1px"><TriggerSelect><XBus /></TriggerSelect></RowCell>
              <RowCell $pad="0 1px"><TriggerSelect><Edge /></TriggerSelect></RowCell>
              <RowCell />
              <Grow />
              <Scroll l={0} w={66} />
            </Column>
            <Column>
              <Marker>
                <MarkerFlag>M2</MarkerFlag>
                <MarkerArrow />
              </Marker>
              <ColTop />
              <WaveChart />
              <Scroll l={443} w={138} mb={2} />
              <MiniStrip />
            </Column>
          </Columns>
        </Inner>
      </Frame>
    </Body>

    <TabStrip>
      <Tab $w={139} $pl={4}><OverviewIcon /><TabLabel>Overview</TabLabel></Tab>
      <Tab $w={139} $pl={5}><ListingIcon /><TabLabel>Listing-1</TabLabel></Tab>
      <Tab $w={139} $ml={3} $pl={1} $active><WaveIcon /><TabLabel>Waveform-1</TabLabel></Tab>
    </TabStrip>

    <StatusBar>
      <StatusText>For Help, press F1</StatusText>
      <StatusBtn>Status...</StatusBtn>
      <StatusPane $w={355} />
      <StatusPane $w={88} />
      <MenuItem $ml={14}>Lo</MenuItem>
    </StatusBar>
  </Win>
);

const App = () => (
  <Page>
    <GlobalStyle />
    <Desk>
      <Clip $ghost><StaleWindow /></Clip>
      <Clip><AppWindow /></Clip>
    </Desk>
    <TaskBar>
      <StartButton>
        <XpLogo />
        <StartSeam />
        <XpLogo />
        <StartText>start</StartText>
      </StartButton>
      <QuickIcons>
        <Starburst size={17} />
        <IeIcon />
        <MailIcon />
        <Chevrons>»</Chevrons>
      </QuickIcons>
      <TaskButton $active><Starburst size={16} />Agilent Logic Analyze...</TaskButton>
      <TaskButton><BrushesIcon />halo 1B 24M INT.bmp...</TaskButton>
      <TaskButton><Folder w={17} />CK LIN</TaskButton>
      <Tray>
        <TrayBack><Chev color="#fff" /></TrayBack>
        <Shield />
        <IoBox>IO</IoBox>
        <VncIcon />
        <Clock>8:10</Clock>
      </Tray>
    </TaskBar>
  </Page>
);

export default App;
